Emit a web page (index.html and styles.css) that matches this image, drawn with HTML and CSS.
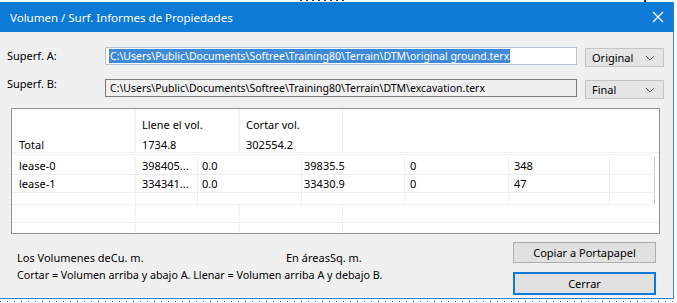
FILE: index.html
```html
<!DOCTYPE html>
<html>
<head>
<meta charset="utf-8">
<link rel="stylesheet" href="styles.css">
</head>
<body>
<div class="topstrip"><span class="dash d1"></span><span class="dash d2"></span></div>
<div class="window">
  <div class="titlebar">
    <span class="title">Volumen / Surf. Informes de Propiedades</span>
    <span class="close">
      <svg width="12" height="12" viewBox="0 0 12 12"><path d="M1 1 L11 11 M11 1 L1 11" stroke="#fff" stroke-width="1.3" fill="none"/></svg>
    </span>
  </div>
  <div class="content">
    <div class="field-row row-a">
      <span class="label">Superf. A:</span>
      <div class="textbox focused"><span class="sel">C:\Users\Public\Documents\Softree\Training80\Terrain\DTM\original ground.terx</span></div>
      <div class="combo"><span>Original</span><svg class="chev" width="10" height="6" viewBox="0 0 10 6"><path d="M1 1 L5 5 L9 1" stroke="#555" stroke-width="1" fill="none"/></svg></div>
    </div>
    <div class="field-row row-b">
      <span class="label">Superf. B:</span>
      <div class="textbox"><span>C:\Users\Public\Documents\Softree\Training80\Terrain\DTM\excavation.terx</span></div>
      <div class="combo"><span>Final</span><svg class="chev" width="10" height="6" viewBox="0 0 10 6"><path d="M1 1 L5 5 L9 1" stroke="#555" stroke-width="1" fill="none"/></svg></div>
    </div>

    <div class="grid">
      <div class="block1">
        <div class="c c1"></div><div class="c c2 hdr">Llene el vol.</div><div class="c c3 hdr">Cortar vol.</div><div class="c c4"></div>
        <div class="c c1 tot">Total</div><div class="c c2 tot">1734.8</div><div class="c c3 tot">302554.2</div><div class="c c4"></div>
      </div>
      <div class="block2">
        <div class="r">
          <div class="d w1">lease-0</div><div class="d w2">398405...</div><div class="d w3">0.0</div><div class="d w5">39835.5</div><div class="d w6">0</div><div class="d w7">348</div><div class="d w8"></div>
        </div>
        <div class="r">
          <div class="d w1">lease-1</div><div class="d w2">334341...</div><div class="d w3">0.0</div><div class="d w5">33430.9</div><div class="d w6">0</div><div class="d w7">47</div><div class="d w8"></div>
        </div>
        <div class="r short">
          <div class="d w1"></div><div class="d w2"></div><div class="d w3"></div><div class="d w5"></div><div class="d w6"></div><div class="d w7"></div><div class="d w8"></div>
        </div>
      </div>
      <div class="block3">
        <div class="e"><div class="c c1"></div><div class="c c2"></div><div class="c c3"></div><div class="c c4"></div></div>
        <div class="e last"><div class="c c1"></div><div class="c c2"></div><div class="c c3"></div><div class="c c4"></div></div>
      </div>
    </div>

    <div class="footer">
      <div class="notes">
        <div class="units"><span class="u1">Los Volumenes deCu. m.</span><span class="u2">En áreasSq. m.</span></div>
        <div class="legend">Cortar = Volumen arriba y abajo A. Llenar = Volumen arriba A y debajo B.</div>
      </div>
      <div class="buttons">
        <div class="btn">Copiar a Portapapel</div>
        <div class="btn default">Cerrar</div>
      </div>
    </div>
  </div>
</div>
<div class="bottomstrip"></div>
</body>
</html>
```
FILE: styles.css
```css
* { box-sizing: border-box; }
html, body { margin: 0; padding: 0; background: #fff; }
body {
  width: 677px; height: 303px; overflow: hidden;
  font-family: "Noto Sans", "Open Sans", sans-serif;
  font-size: 11px; color: #000;
}
.topstrip { height: 2px; position: relative; }
.dash { position: absolute; top: 0; height: 1px;
  background: repeating-linear-gradient(90deg, #333 0 2px, transparent 2px 6px); }
.d1 { left: 300px; width: 46px; }
.d2 { left: 644px; width: 3px; height: 2px; }

.window {
  width: 674px; height: 297px;
  background: #f0f0f0;
  border-right: 1px solid #2a86d6;
  border-bottom: 1px solid #2a86d6;
  display: flex; flex-direction: column;
}
.titlebar {
  height: 30px; background: #0e7ad7;
  display: flex; align-items: center; justify-content: space-between;
  padding: 0 9px 0 10px; color: #fff;
}
.title { font-size: 11.6px; letter-spacing: -0.05px; }
.close { display: flex; width: 12px; height: 12px; }

.content { padding: 15px 0 0 0; flex: 1; display: flex; flex-direction: column; }
.field-row { display: flex; align-items: flex-start; height: 32px; }
.label { width: 105px; padding-left: 7px; padding-top: 1px; }
.row-b .label { padding-top: 0; margin-top: -3px; }
.textbox {
  width: 472px; height: 18px; background: #fff;
  border: 1px solid #9ca7b3; padding: 0 0 0 3px;
  font-size: 10.5px; letter-spacing: 0; line-height: 16px; white-space: nowrap; overflow: hidden;
}
.row-b .textbox { background: #f0f0f0; border-color: #7a7a7a; padding-left: 4px; }
.textbox.focused { border-color: #b9c4cf; }
.sel { background: #3f8ad6; color: #fff; display: inline-block; line-height: 14px; padding: 0 1px; }
.combo {
  margin-left: 8px; width: 79px; height: 19px; margin-top: 1px;
  background: #e5e5e5; border: 1px solid #c4c4c4;
  display: flex; align-items: center; justify-content: space-between; padding: 0 8px 0 6px;
}

.grid {
  margin: -3px 0 0 11px; width: 649px; height: 126px;
  background: #fff; border: 1px solid #8e9399;
}
.block1 {
  display: grid; grid-template-columns: 124px 104px 103px 1fr;
  grid-template-rows: 27px 16px; height: 44px; border-bottom: 1px solid #f0f0f0;
}
.c { border-right: 1px solid #f0f0f0; }
.c4 { border-right: none; }
.c1 { padding-left: 7px; }
.c2, .c3 { padding-left: 6px; }
.hdr { padding-top: 8px; }
.tot { line-height: 17px; }
.block2 { margin-top: 1px; width: 643px; border-top: 1px solid #f2f2f2; padding-top: 2px; }
.r { display: flex; height: 18px; border-bottom: 1px solid #efefef; line-height: 17px; }
.r.short { height: 12px; border-bottom: 1px solid #f0f0f0; }
.d { border-right: 1px solid #efefef; padding-left: 7px; white-space: nowrap; }
.w1 { width: 124px; }
.w2 { width: 62px; padding-left: 6px; }
.w3 { width: 104px; padding-left: 4px; }
.w5 { width: 103px; padding-left: 2px; }
.w6 { width: 104px; padding-left: 5px; }
.w7 { width: 101px; padding-left: 5px; }
.w8 { width: 45px; border-right: 1px solid #c8c8c8; }
.block3 .e { display: grid; grid-template-columns: 124px 104px 103px 1fr; height: 18px; border-bottom: 1px solid #f0f0f0; }
.block3 .e.last { border-bottom: none; height: 10px; }

.footer { display: flex; justify-content: space-between; padding: 8px 0 0 0; }
.notes { padding-left: 17px; padding-top: 8px; }
.units { display: flex; height: 18px; }
.u1 { width: 269px; }
.legend { font-size: 10.75px; }
.buttons { display: flex; flex-direction: column; gap: 9px; margin-right: 17px; }
.btn {
  width: 143px; height: 21px; background: #e1e1e1; border: 1px solid #adadad;
  display: flex; align-items: center; justify-content: center; font-size: 11px;
}
.btn.default { height: 23px; border: 2px solid #0e7ad7; }
.bottomstrip { height: 4px;
  background: repeating-linear-gradient(90deg, #555 0 1px, transparent 1px 7px);
  background-size: 100% 1px; background-repeat: no-repeat; background-position: 0 2px; }
```
